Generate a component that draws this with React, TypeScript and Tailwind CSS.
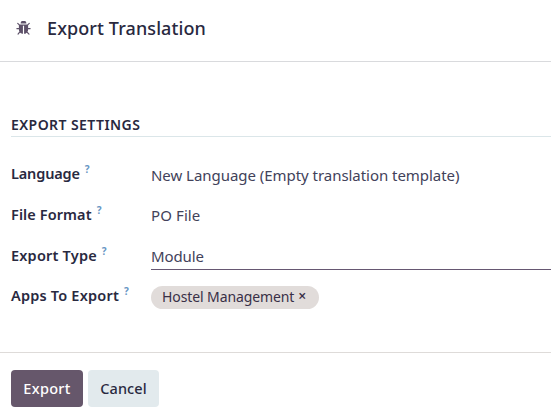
import React from "react";

function BugIcon() {
  return (
    <svg viewBox="0 128 1664 1536" className="h-[14px] w-[15px] shrink-0 fill-[#5d5068]" aria-hidden="true">
      <path d="M1632 960q0 26-19 45t-45 19h-224q0 171-67 290l208 209q19 19 19 45t-19 45q-18 19-45 19t-45-19l-198-197q-5 5-15 13t-42 28.500-65 36.500-82 29-97 13v-896h-128v896q-51 0-101.500-13.500t-87-33-66-39-43.500-32.500l-15-14-183 207q-20 21-48 21-24 0-43-16-19-18-20.500-44.500t15.500-46.500l202-227q-58-114-58-274h-224q-26 0-45-19t-19-45 19-45 45-19h224v-294l-173-173q-19-19-19-45t19-45 45-19 45 19l173 173h844l173-173q19-19 45-19t45 19 19 45-19 45l-173 173v294h224q26 0 45 19t19 45zm-480-576h-640q0-133 93.500-226.500t226.500-93.500 226.500 93.500 93.500 226.500z" />
    </svg>
  );
}

function Label({ text, spacing }: { text: string; spacing: string }) {
  return (
    <div className="flex w-[140px] shrink-0 items-start whitespace-nowrap pt-[2px]">
      <span className={`text-[14.5px] font-semibold leading-5 ${spacing}`}>{text}</span>
      <span className="ml-[5px] mt-px text-[10px] font-bold leading-[10px] text-[#6796c4]">?</span>
    </div>
  );
}

export default function App() {
  return (
    <div className="flex h-[417px] w-[551px] flex-col overflow-hidden bg-white font-['Noto_Sans',sans-serif] text-[#29293f]">
      <header className="flex h-[62px] shrink-0 items-center border-b border-[#d9dadd] pb-[5px] pl-[16px]">
        <BugIcon />
        <h1 className="ml-[16px] -mt-px whitespace-nowrap text-[18px] font-medium leading-6 tracking-[0.1px]">Export Translation</h1>
      </header>
      <main className="h-[290px] shrink-0 pl-[11px] pt-[53px]">
        <h2 className="h-[22px] whitespace-nowrap border-b border-[#dbe6e9] text-[14px] font-semibold leading-5 tracking-[0.43px]">EXPORT SETTINGS</h2>
        <div className="mt-[24px] flex h-[41px]">
          <Label text="Language" spacing="tracking-[-0.15px]" />
          <div className="whitespace-nowrap pt-[4px] text-[15px] leading-5 tracking-[-0.04px] text-[#42425a]">New Language (Empty translation template)</div>
        </div>
        <div className="flex h-[41px]">
          <Label text="File Format" spacing="tracking-[0.1px]" />
          <div className="whitespace-nowrap pt-[3px] text-[15px] leading-5 tracking-[0.1px] text-[#42425a]">PO File</div>
        </div>
        <div className="flex h-[40px]">
          <Label text="Export Type" spacing="tracking-[0.2px]" />
          <div className="h-[27px] flex-1 border-b border-[#665772] pt-[3px] text-[15px] leading-5 tracking-[-0.1px] text-[#42425a]">Module</div>
        </div>
        <div className="flex h-[41px]">
          <Label text="Apps To Export" spacing="tracking-[0.2px]" />
          <div className="mt-[3px] flex h-[23px] w-[168px] items-center whitespace-nowrap rounded-full bg-[#e1dcda] pl-[11px] text-[14px] leading-5 text-[#393047]">
            <span className="-mt-[2px] tracking-[-0.1px]">Hostel Management</span>
            <span className="-mt-[3px] ml-1 text-[14px] font-semibold leading-none">×</span>
          </div>
        </div>
      </main>
      <footer className="flex flex-1 gap-[5px] border-t border-[#dedbd9] pl-[11px] pt-[17px]">
        <button className="h-[37px] w-[72px] rounded-[4px] bg-[#66576b] text-[14.5px] font-medium tracking-[0.3px] text-white">Export</button>
        <button className="h-[37px] w-[71px] rounded-[4px] bg-[#e2eaed] text-[14.5px] font-medium tracking-[0.1px] text-[#29293f]">Cancel</button>
      </footer>
    </div>
  );
}
